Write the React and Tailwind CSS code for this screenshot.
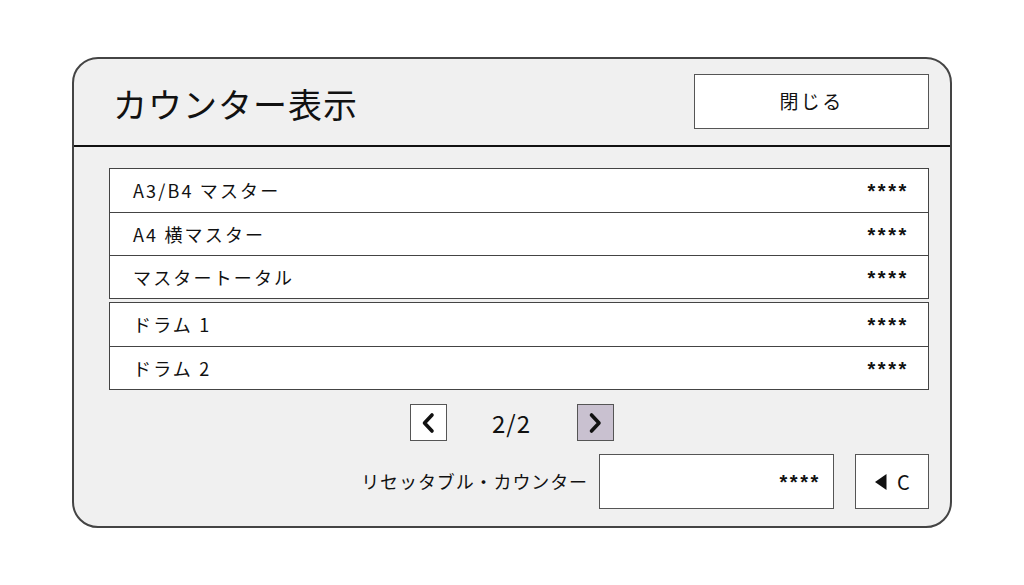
const rowsA = [
  { label: 'A3/B4 マスター', value: '****' },
  { label: 'A4 横マスター', value: '****' },
  { label: 'マスタートータル', value: '****' },
]

const rowsB = [
  { label: 'ドラム 1', value: '****' },
  { label: 'ドラム 2', value: '****' },
]

const font = { fontFamily: '"Noto Sans CJK JP", "Noto Sans", sans-serif' }

// masked value, drawn with Arial-width asterisks so they read as small stars
const Stars = ({ className = '' }) => (
  <span className={`font-['Liberation_Sans',sans-serif] font-bold text-[20px] tracking-[2.6px] leading-none ${className}`}>
    ****
  </span>
)

const Group = ({ rows }) => (
  <div className="border-[1.5px] border-[#444] bg-white">
    {rows.map((r, i) => (
      <div
        key={r.label}
        className={`flex items-center justify-between h-[43px] pl-[23px] pr-[19px] text-[#111] ${
          i > 0 ? 'border-t-[1.5px] border-[#444]' : ''
        }`}
      >
        <span className="text-[18px] tracking-[0.12em]">{r.label}</span>
        <Stars className="pt-[1px]" />
      </div>
    ))}
  </div>
)

export default function App() {
  return (
    <div className="w-[1024px] h-[585px] bg-white pt-[57px] pl-[72px]" style={font}>
      <div className="w-[880px] h-[471px] rounded-[26px] border-2 border-[#444] bg-[#f0f0f0] overflow-hidden flex flex-col">
        {/* header */}
        <div className="h-[88px] shrink-0 border-b-2 border-[#111] flex items-center justify-between pl-[39px] pr-[21px]">
          <h1 className="text-[34px] text-[#111] tracking-[0.03em] leading-none pt-[4px]">カウンター表示</h1>
          <button className="w-[235px] h-[55px] bg-white border-[1.5px] border-[#555] text-[19px] text-[#111] tracking-[0.12em] mb-[1px]">
            閉じる
          </button>
        </div>

        <div className="flex flex-col pl-[35px] pr-[21px] pt-[21px]">
          <div className="flex flex-col gap-[3px]">
            <Group rows={rowsA} />
            <Group rows={rowsB} />
          </div>

          {/* pager */}
          <div className="flex items-center justify-center gap-[43px] mt-[14px] pr-[15px]">
            <button className="w-[37px] h-[37px] bg-white border-[1.5px] border-[#555] flex items-center justify-center">
              <svg width="16" height="24" viewBox="0 0 16 24">
                <path d="M12 4 L4.5 12 L12 20" fill="none" stroke="#111" strokeWidth="3.6" strokeLinecap="round" strokeLinejoin="round" />
              </svg>
            </button>
            <span className="text-[24px] text-[#111] tracking-[0.04em] w-[44px] text-center">2/2</span>
            <button className="w-[37px] h-[37px] bg-[#c9c1d0] border-[1.5px] border-[#555] flex items-center justify-center">
              <svg width="16" height="24" viewBox="0 0 16 24">
                <path d="M4.5 4 L12 12 L4.5 20" fill="none" stroke="#111" strokeWidth="3.6" strokeLinecap="round" strokeLinejoin="round" />
              </svg>
            </button>
          </div>

          {/* resettable counter */}
          <div className="flex items-center justify-end mt-[13px]">
            <span className="text-[18px] text-[#111] tracking-[0.05em] mr-[11px]">リセッタブル・カウンター</span>
            <div className="w-[235px] h-[55px] bg-white border-[1.5px] border-[#555] flex items-center justify-end pr-[12px] text-[#111]">
              <Stars />
            </div>
            <button className="ml-[21px] w-[74px] h-[55px] bg-white border-[1.5px] border-[#555] flex items-center justify-center gap-[10px] text-[20px] text-[#111]">
              <svg width="13" height="18" viewBox="0 0 13 18">
                <path d="M12.5 1 L1 9 L12.5 17 Z" fill="#111" />
              </svg>
              <span>C</span>
            </button>
          </div>
        </div>
      </div>
    </div>
  )
}
